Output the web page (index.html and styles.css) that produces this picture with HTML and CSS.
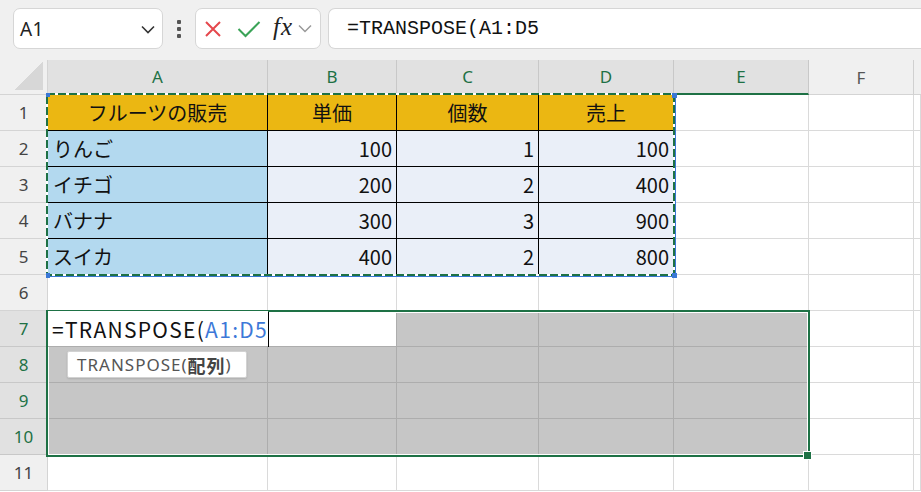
FILE: index.html
```html
<!DOCTYPE html>
<html lang="ja">
<head>
<meta charset="utf-8">
<link rel="stylesheet" href="styles.css">
</head>
<body>
<div class="app">
  <div class="toolbar">
    <div class="namebox">
      <span class="nb-text">A1</span>
      <svg class="nb-chev" width="14" height="9" viewBox="0 0 14 9"><path d="M1 1.5 L7 7.5 L13 1.5" fill="none" stroke="#333" stroke-width="1.6"/></svg>
    </div>
    <div class="dots"><span></span><span></span><span></span></div>
    <div class="fxbox">
      <svg class="ic-x" width="18" height="18" viewBox="0 0 18 18"><path d="M2 2 L16 16 M16 2 L2 16" stroke="#e5484d" stroke-width="2" fill="none"/></svg>
      <svg class="ic-ok" width="24" height="18" viewBox="0 0 24 18"><path d="M1.5 9 L8.5 16 L22.5 2" stroke="#3aa357" stroke-width="2" fill="none"/></svg>
      <span class="ic-fx">fx</span>
      <svg class="ic-chev" width="14" height="9" viewBox="0 0 14 9"><path d="M1 1.5 L7 7.5 L13 1.5" fill="none" stroke="#999" stroke-width="1.5"/></svg>
    </div>
    <div class="formula">=TRANSPOSE(A1:D5</div>
  </div>

  <div class="sheet">
    <!-- header row -->
    <div class="corner"><span class="tri"></span></div>
    <div class="ch sel">A</div><div class="ch sel">B</div><div class="ch sel">C</div><div class="ch sel">D</div><div class="ch sel">E</div><div class="ch">F</div><div class="ch last"></div>

    <!-- row 1 -->
    <div class="rh">1</div>
    <div class="c t th">フルーツの販売</div><div class="c t th">単価</div><div class="c t th">個数</div><div class="c t th">売上</div>
    <div class="c"></div><div class="c"></div><div class="c"></div>
    <!-- row 2 -->
    <div class="rh">2</div>
    <div class="c t tn">りんご</div><div class="c t tv">100</div><div class="c t tv">1</div><div class="c t tv">100</div>
    <div class="c"></div><div class="c"></div><div class="c"></div>
    <!-- row 3 -->
    <div class="rh">3</div>
    <div class="c t tn">イチゴ</div><div class="c t tv">200</div><div class="c t tv">2</div><div class="c t tv">400</div>
    <div class="c"></div><div class="c"></div><div class="c"></div>
    <!-- row 4 -->
    <div class="rh">4</div>
    <div class="c t tn">バナナ</div><div class="c t tv">300</div><div class="c t tv">3</div><div class="c t tv">900</div>
    <div class="c"></div><div class="c"></div><div class="c"></div>
    <!-- row 5 -->
    <div class="rh">5</div>
    <div class="c t tn">スイカ</div><div class="c t tv">400</div><div class="c t tv">2</div><div class="c t tv">800</div>
    <div class="c"></div><div class="c"></div><div class="c"></div>
    <!-- row 6 -->
    <div class="rh">6</div>
    <div class="c"></div><div class="c"></div><div class="c"></div><div class="c"></div><div class="c"></div><div class="c"></div><div class="c"></div>
    <!-- row 7 -->
    <div class="rh sel">7</div>
    <div class="c edit">=TRANSPOSE(<span class="ref">A1:D5</span></div><div class="c white"></div><div class="c g"></div><div class="c g"></div><div class="c g"></div>
    <div class="c"></div><div class="c"></div>
    <!-- row 8 -->
    <div class="rh sel">8</div>
    <div class="c g"></div><div class="c g"></div><div class="c g"></div><div class="c g"></div><div class="c g"></div>
    <div class="c"></div><div class="c"></div>
    <!-- row 9 -->
    <div class="rh sel">9</div>
    <div class="c g"></div><div class="c g"></div><div class="c g"></div><div class="c g"></div><div class="c g"></div>
    <div class="c"></div><div class="c"></div>
    <!-- row 10 -->
    <div class="rh sel">10</div>
    <div class="c g"></div><div class="c g"></div><div class="c g"></div><div class="c g"></div><div class="c g"></div>
    <div class="c"></div><div class="c"></div>
    <!-- row 11 -->
    <div class="rh">11</div>
    <div class="c"></div><div class="c"></div><div class="c"></div><div class="c"></div><div class="c"></div><div class="c"></div><div class="c"></div>

    <!-- overlays -->
    <svg class="ants" width="632" height="186" viewBox="0 0 632 186">
      <rect x="1" y="1" width="627" height="181" fill="none" stroke="#ffffff" stroke-width="2"/>
      <rect x="1" y="1" width="627" height="181" fill="none" stroke="#1e7145" stroke-width="2" stroke-dasharray="8 3"/>
      <path d="M629.5 2 V183.5 H1" fill="none" stroke="#3a78d6" stroke-width="1"/>
      <rect x="0" y="0" width="4" height="4" fill="#3a78d6"/>
      <rect x="626" y="0" width="5" height="5" fill="#3a78d6"/>
      <rect x="0" y="180" width="4" height="5" fill="#3a78d6"/>
      <rect x="626" y="180" width="5" height="5" fill="#3a78d6"/>
    </svg>
    <div class="selbox"></div>
    <div class="cursor"></div>
    <div class="handle"></div>
    <div class="tip">TRANSPOSE(<b>配列</b>)</div>
  </div>
</div>
</body>
</html>
```

FILE: styles.css
```css
* { box-sizing: border-box; }
html, body { margin: 0; padding: 0; }
body {
  width: 921px;
  height: 492px;
  overflow: hidden;
  background: #ffffff;
  font-family: "Noto Sans", "Noto Sans CJK JP", sans-serif;
}
.app { width: 921px; height: 492px; display: flex; flex-direction: column; }

.toolbar {
  height: 60px;
  flex: none;
  background: #f0f0f0;
  display: flex;
  align-items: flex-start;
  padding: 8px 0 0 13px;
}
.namebox {
  width: 150px;
  height: 41px;
  background: #fff;
  border: 1px solid #d6d6d6;
  border-radius: 7px;
  display: flex;
  align-items: center;
  justify-content: space-between;
  padding: 0 7px 0 6px;
}
.nb-text { font-size: 19px; color: #222; letter-spacing: 0.3px; }
.nb-chev { margin-top: 1px; }
.dots {
  width: 32px;
  height: 41px;
  display: flex;
  flex-direction: column;
  align-items: center;
  justify-content: center;
  gap: 3px;
}
.dots span { width: 4px; height: 4px; border-radius: 1px; background: #555; }
.fxbox {
  width: 126px;
  height: 41px;
  background: #fff;
  border: 1px solid #d6d6d6;
  border-radius: 7px;
  display: flex;
  align-items: center;
  padding-left: 8px;
}
.ic-x { margin-right: 15px; }
.ic-ok { margin-right: 12px; }
.ic-fx {
  font-family: "Liberation Serif", "DejaVu Serif", serif;
  font-style: italic;
  font-size: 25px;
  font-weight: normal;
  color: #222;
  margin-right: 5px;
  line-height: 1;
  margin-top: -4px;
  letter-spacing: 1px;
}
.formula {
  margin-left: 7px;
  flex: 1;
  height: 41px;
  background: #fff;
  border: 1px solid #d6d6d6;
  border-right: none;
  border-radius: 7px 0 0 7px;
  padding-left: 18px;
  display: flex;
  align-items: center;
  font-family: "Liberation Mono", "DejaVu Sans Mono", monospace;
  font-size: 20px;
  color: #111;
}

.sheet {
  position: relative;
  flex: none;
  display: grid;
  grid-template-columns: 48px 220px 129px 142px 135px 135px 105px 1fr;
  grid-template-rows: 35px repeat(11, 36px);
}
.corner {
  background: #f0f0f0;
  border-right: 1px solid #d4d4d4;
  border-bottom: 1px solid #d4d4d4;
  position: relative;
  display: flex;
  justify-content: flex-end;
  align-items: flex-end;
  padding: 0 4px 4px 0;
}
.tri {
  width: 28px;
  height: 28px;
  background: linear-gradient(to bottom right, transparent 50%, #d7d7d7 50%);
}
.ch {
  background: #f0f0f0;
  border-right: 1px solid #d0d0d0;
  border-bottom: 1px solid #d4d4d4;
  display: flex;
  align-items: center;
  justify-content: center;
  font-size: 17px;
  color: #555;
}
.ch.sel {
  background: #e1e1e1;
  color: #1e7145;
  border-right-color: #c8c8c8;
  border-bottom: 2px solid #1e7145;
}
.ch.last { border-right: none; }
.rh {
  background: #f0f0f0;
  border-right: 1px solid #d4d4d4;
  border-bottom: 1px solid #d4d4d4;
  display: flex;
  align-items: center;
  justify-content: center;
  font-size: 17px;
  color: #444;
}
.rh.sel { background: #e1e1e1; color: #1e7145; border-bottom-color: #c8c8c8; }

.c {
  background: #fff;
  border-right: 1px solid #dadada;
  border-bottom: 1px solid #dadada;
  font-family: "Noto Sans CJK JP", sans-serif;
  font-size: 20px;
  color: #111;
  display: flex;
  align-items: center;
  white-space: nowrap;
}
.c.t { border-right-color: #000; border-bottom-color: #000; }
.th { background: #ebb712; justify-content: center; }
.tn { background: #b3d9ef; padding-left: 5px; }
.tv { background: #eaeff8; justify-content: flex-end; padding-right: 4px; }
.c.g { background: #c6c6c6; border-right-color: #adadad; border-bottom-color: #adadad; }
.c.white { border-right-color: #adadad; border-bottom-color: #adadad; }
.c.edit {
  border-right: none;
  border-bottom-color: #adadad;
  padding-left: 4px;
  overflow: visible;
  position: relative;
  z-index: 1;
  font-size: 21px;
  letter-spacing: 1.3px;
}
.ref { color: #3d78d8; }

.ants { position: absolute; left: 46px; top: 33px; }
.selbox {
  position: absolute;
  left: 46px;
  top: 250px;
  width: 764px;
  height: 147px;
  border: 2px solid #1e7145;
  box-shadow: inset 0 0 0 1px #fff;
  pointer-events: none;
}
.cursor {
  position: absolute;
  left: 268px;
  top: 252px;
  width: 1px;
  height: 35px;
  background: #000;
  z-index: 2;
}
.handle {
  position: absolute;
  left: 803px;
  top: 391px;
  width: 9px;
  height: 9px;
  background: #1e7145;
  border: 1px solid #fff;
}
.tip {
  position: absolute;
  left: 67px;
  top: 291px;
  width: 180px;
  height: 27px;
  background: #fff;
  border: 1px solid #d2d2d2;
  border-radius: 2px;
  box-shadow: 0 1px 2px rgba(0,0,0,0.12);
  font-family: "Noto Sans", "Noto Sans CJK JP", sans-serif;
  font-size: 17px;
  letter-spacing: 1px;
  color: #555;
  display: flex;
  align-items: center;
  padding-left: 9px;
  z-index: 3;
  white-space: nowrap;
}
.tip b { color: #444; font-weight: bold; font-family: "Noto Sans CJK JP", sans-serif; font-size: 18px; }
```
